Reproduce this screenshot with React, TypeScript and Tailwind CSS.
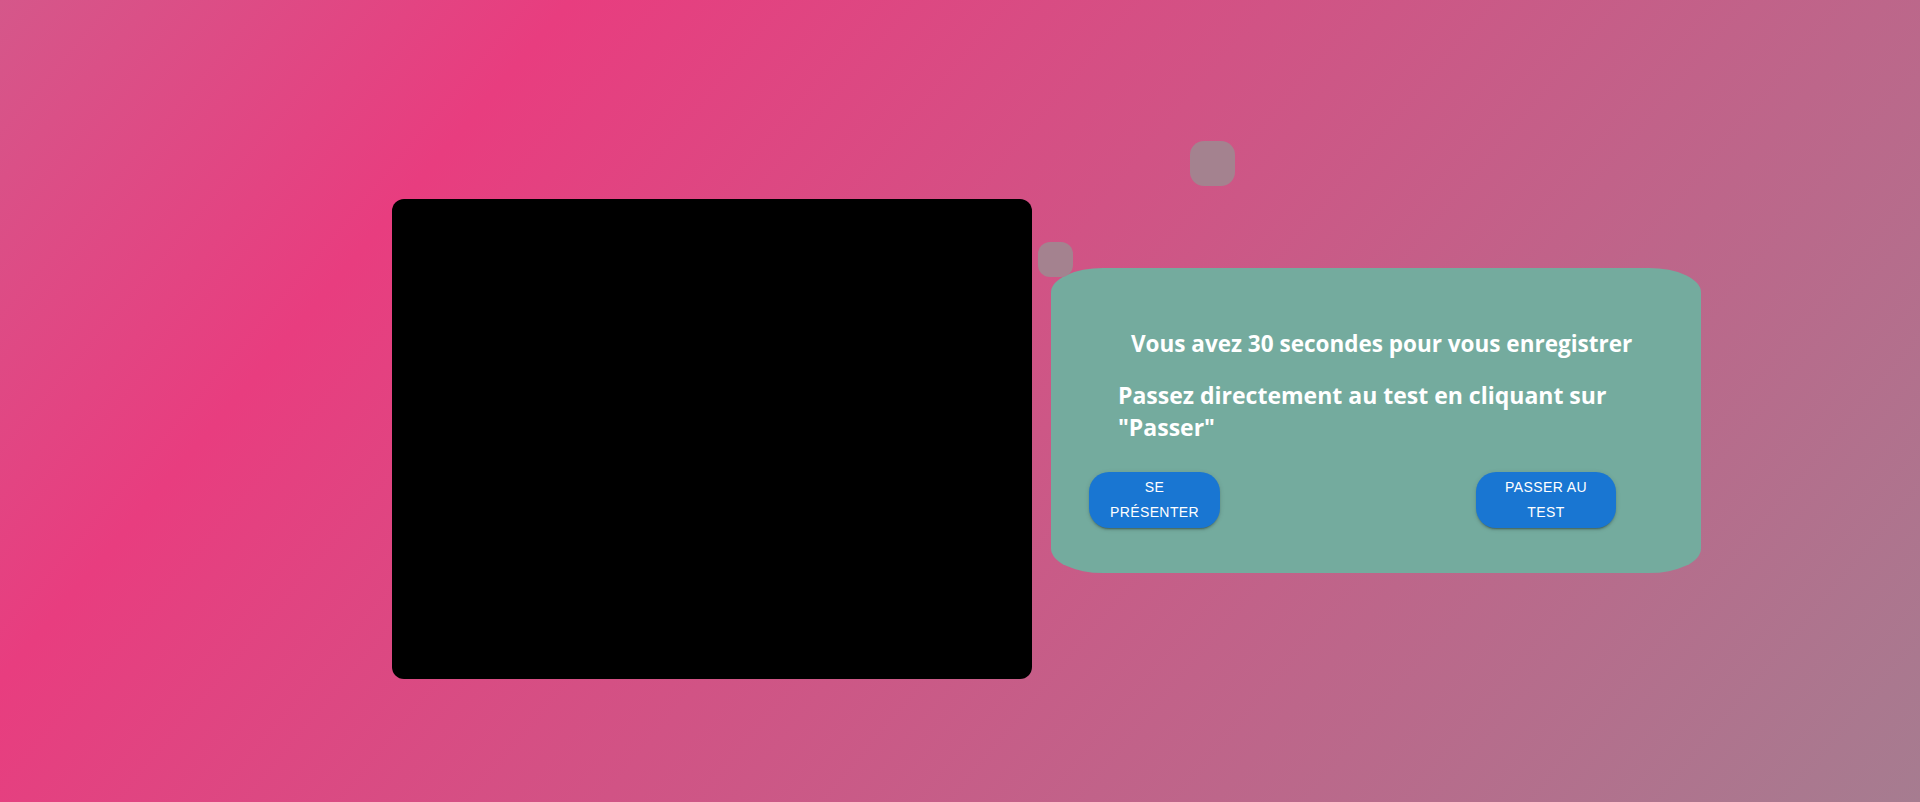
export default function App() {
  return (
    <div className="h-[802px] w-full overflow-hidden bg-[linear-gradient(130deg,#d5578a_0%,#e83d7f_22%,#a67c90_100%)]">
      <div className="flex items-start pl-[392px] pt-[199px] gap-[19px]">
        {/* Video preview */}
        <div className="w-[640px] h-[480px] bg-black rounded-[12px]" />

        {/* Speech bubble */}
        <div className="relative mt-[69px]">
          <div className="absolute left-[139px] top-[-127px] w-[45px] h-[45px] rounded-[14px] bg-[#a4828f]" />
          <div className="absolute left-[-13px] top-[-26px] w-[35px] h-[35px] rounded-[12px] bg-[#a4828f]" />

          <div className="w-[650px] h-[305px] bg-[#74ab9e] rounded-[8%] font-['Open_Sans','Noto_Sans',sans-serif] text-white font-bold">
            <p className="pl-[80px] pt-[61px] text-[22.5px] leading-[30px]">
              Vous avez 30 secondes pour vous enregistrer
            </p>
            <p className="pl-[67px] mt-[20px] text-[23px] leading-[32px]">
              Passez directement au test en cliquant sur
              <br />
              "Passer"
            </p>

            <div className="flex justify-between pl-[38px] pr-[85px] mt-[29px] font-['Liberation_Sans',Arial,sans-serif] font-normal">
              <button className="w-[131px] h-[56px] rounded-[20px] bg-[#1976d2] text-white text-[14px] leading-[25px] tracking-[0.4px] uppercase shadow-[0px_3px_1px_-2px_rgba(0,0,0,0.2),0px_2px_2px_0px_rgba(0,0,0,0.14),0px_1px_5px_0px_rgba(0,0,0,0.12)]">
                Se
                <br />
                Présenter
              </button>
              <button className="w-[140px] h-[56px] rounded-[20px] bg-[#1976d2] text-white text-[14px] leading-[25px] tracking-[0.4px] uppercase shadow-[0px_3px_1px_-2px_rgba(0,0,0,0.2),0px_2px_2px_0px_rgba(0,0,0,0.14),0px_1px_5px_0px_rgba(0,0,0,0.12)]">
                Passer au
                <br />
                Test
              </button>
            </div>
          </div>
        </div>
      </div>
    </div>
  );
}
